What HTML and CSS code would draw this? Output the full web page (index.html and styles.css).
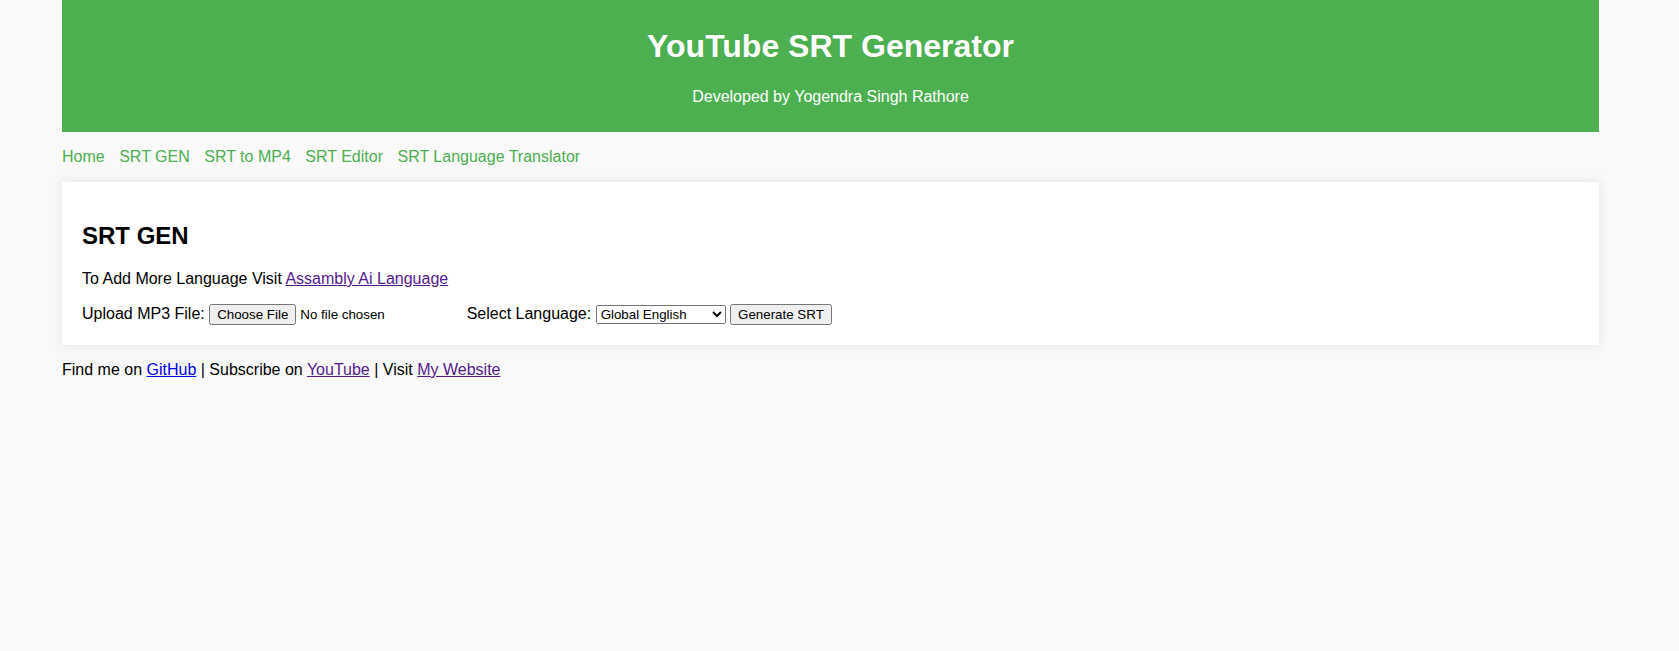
FILE: index.html
```html
<!DOCTYPE html>
<html lang="en">
<head>
<meta charset="utf-8">
<title>YouTube SRT Generator</title>
<link rel="stylesheet" href="styles.css">
</head>
<body>
<div class="page">
  <header class="site-header">
    <h1 class="site-title">YouTube SRT Generator</h1>
    <p class="site-sub">Developed by Yogendra Singh Rathore</p>
  </header>
  <nav class="site-nav">
    <a class="nav-link" href="#">Home</a>
    <a class="nav-link" href="#">SRT GEN</a>
    <a class="nav-link" href="#">SRT to MP4</a>
    <a class="nav-link" href="#">SRT Editor</a>
    <a class="nav-link" href="#">SRT Language Translator</a>
  </nav>
  <main class="card">
    <h2 class="card-title">SRT GEN</h2>
    <p class="card-text">To Add More Language Visit <a class="link visited" href="#">Assambly Ai Language</a></p>
    <form class="upload-form">
      <label class="field-label" for="mp3">Upload MP3 File:</label>
      <input class="file-input" type="file" id="mp3">
      <label class="field-label" for="lang">Select Language:</label>
      <select class="lang-select" id="lang">
        <option>Global English</option>
        <option>Hindi</option>
        <option>Spanish</option>
      </select>
      <button class="gen-btn" type="button">Generate SRT</button>
    </form>
  </main>
  <footer class="site-footer">
    Find me on <a class="link fresh" href="#">GitHub</a> | Subscribe on <a class="link visited" href="#">YouTube</a> | Visit <a class="link visited" href="#">My Website</a>
  </footer>
</div>
</body>
</html>
```
FILE: styles.css
```css
html, body {
  margin: 0;
  padding: 0;
}
body {
  background: #f9f9f9;
  font-family: Arial, "Liberation Sans", sans-serif;
  font-size: 16px;
  color: #000;
}
.page {
  width: 1537px;
  margin-left: 62px;
}
.site-header {
  background: #4caf50;
  color: #fff;
  text-align: center;
  padding: 10px 0;
}
.site-title {
  font-size: 32px;
  font-weight: bold;
  margin: 18px 0 23px;
}
.site-sub {
  margin: 0 0 16px;
}
.site-nav {
  display: flex;
  gap: 14.5px;
  padding: 16px 0;
}
.nav-link {
  color: #4caf50;
  text-decoration: none;
}
.card {
  display: block;
  background: #fff;
  padding: 20px;
  box-shadow: 0 0 10px rgba(0, 0, 0, 0.1);
}
.card-title {
  font-size: 24px;
  margin: 20px 0;
}
.card-text {
  margin: 0 0 16px;
}
.upload-form {
  margin: 0;
}
.lang-select {
  width: 130px;
}
.link.visited {
  color: #551a8b;
}
.link.fresh {
  color: #0000ee;
}
.site-footer {
  margin-top: 16px;
}
```
